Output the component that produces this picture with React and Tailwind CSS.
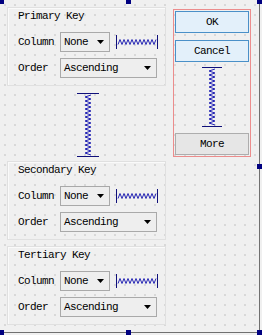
import React from "react";

const txt = "font-['Liberation_Mono',monospace] text-[11px] leading-[12px] tracking-[-0.6px] text-black";

function HSpring() {
  const pts = [];
  for (let x = 2, i = 0; x <= 40; x += 2, i++) pts.push(`${x},${i % 2 ? 4.5 : 9.5}`);
  return (
    <svg width="42" height="14" className="block">
      <line x1="0.5" y1="0" x2="0.5" y2="14" stroke="#10107a" />
      <line x1="41.5" y1="0" x2="41.5" y2="14" stroke="#10107a" />
      <polyline points={pts.join(" ")} fill="none" stroke="#2424b4" strokeWidth="1" />
    </svg>
  );
}

function VSpring({ h, w }) {
  const cx = w / 2;
  const pts = [];
  for (let y = 2, i = 0; y <= h - 2; y += 2, i++) pts.push(`${i % 2 ? cx - 3 : cx + 3},${y}`);
  return (
    <svg width={w} height={h} className="block">
      <line x1="0" y1="0.5" x2={w} y2="0.5" stroke="#10107a" />
      <line x1="0" y1={h - 0.5} x2={w} y2={h - 0.5} stroke="#10107a" />
      <polyline points={pts.join(" ")} fill="none" stroke="#2424b4" strokeWidth="1" />
    </svg>
  );
}

function Arrow() {
  return (
    <svg width="7" height="4" className="block ml-auto">
      <polygon points="0,0 7,0 3.5,4" fill="#000" />
    </svg>
  );
}

function Combo({ text, width }) {
  return (
    <div className={`flex items-center h-[20px] border border-[#a9a9a9] bg-[#eeeeee] pl-[3px] pr-[5px] ${width}`}>
      <span className={txt}>{text}</span>
      <Arrow />
    </div>
  );
}

function Group({ title }) {
  return (
    <div className="h-[79px] border border-[#e0e0e0] shadow-[inset_1px_1px_0_#fafafa] pl-[10px] pr-[7px]">
      <div className={`${txt} mt-[2px]`}>{title}</div>
      <div className="flex items-center mt-[10px] h-[20px]">
        <span className={`${txt} w-[42px]`}>Column</span>
        <Combo text="None" width="w-[50px]" />
        <div className="ml-[6px]">
          <HSpring />
        </div>
      </div>
      <div className="flex items-center mt-[6px] h-[20px]">
        <span className={`${txt} w-[42px]`}>Order</span>
        <Combo text="Ascending" width="w-[97px]" />
      </div>
    </div>
  );
}

function Btn({ label, blue }) {
  return (
    <div
      className={`h-[22px] flex items-center justify-center border ${
        blue ? "border-[#4a90c8] bg-[#e3f0fa]" : "border-[#adadad] bg-[#e6e6e6]"
      }`}
    >
      <span className={txt}>{label}</span>
    </div>
  );
}

function Handle({ pos }) {
  return <div className={`absolute w-[5px] h-[5px] bg-[#000080] ${pos}`} />;
}

export default function App() {
  return (
    <div className="relative w-[262px] h-[335px] overflow-hidden bg-[#f0f0f0]">
      <div className="w-[260px] h-[333px] border-r border-b border-[#707070] bg-[radial-gradient(circle,#bcbcbc_0.6px,transparent_0.8px)] bg-[length:10px_10px] bg-[position:0px_0px] flex items-start pt-[7px] pl-[7px]">
        <div className="w-[159px] flex flex-col">
          <Group title="Primary Key" />
          <div className="pl-[70px] pt-[7px] pb-[4px]">
            <VSpring h={64} w={22} />
          </div>
          <Group title="Secondary Key" />
          <div className="h-[6px]" />
          <Group title="Tertiary Key" />
        </div>
        <div className="ml-[7px] mt-[2px] w-[78px] border border-[#ec8c8c] p-[1px] flex flex-col">
          <Btn label="OK" blue />
          <div className="mt-[7px]">
            <Btn label="Cancel" blue />
          </div>
          <div className="flex justify-center pt-[5px] pb-[6px]">
            <VSpring h={60} w={20} />
          </div>
          <Btn label="More" />
        </div>
      </div>
      <Handle pos="left-[-1px] top-[-1px]" />
      <Handle pos="left-[126px] top-[-1px]" />
      <Handle pos="left-[257px] top-[-1px]" />
      <Handle pos="left-[257px] top-[164px]" />
      <Handle pos="left-[-1px] top-[330px]" />
      <Handle pos="left-[126px] top-[330px]" />
      <Handle pos="left-[257px] top-[330px]" />
    </div>
  );
}
